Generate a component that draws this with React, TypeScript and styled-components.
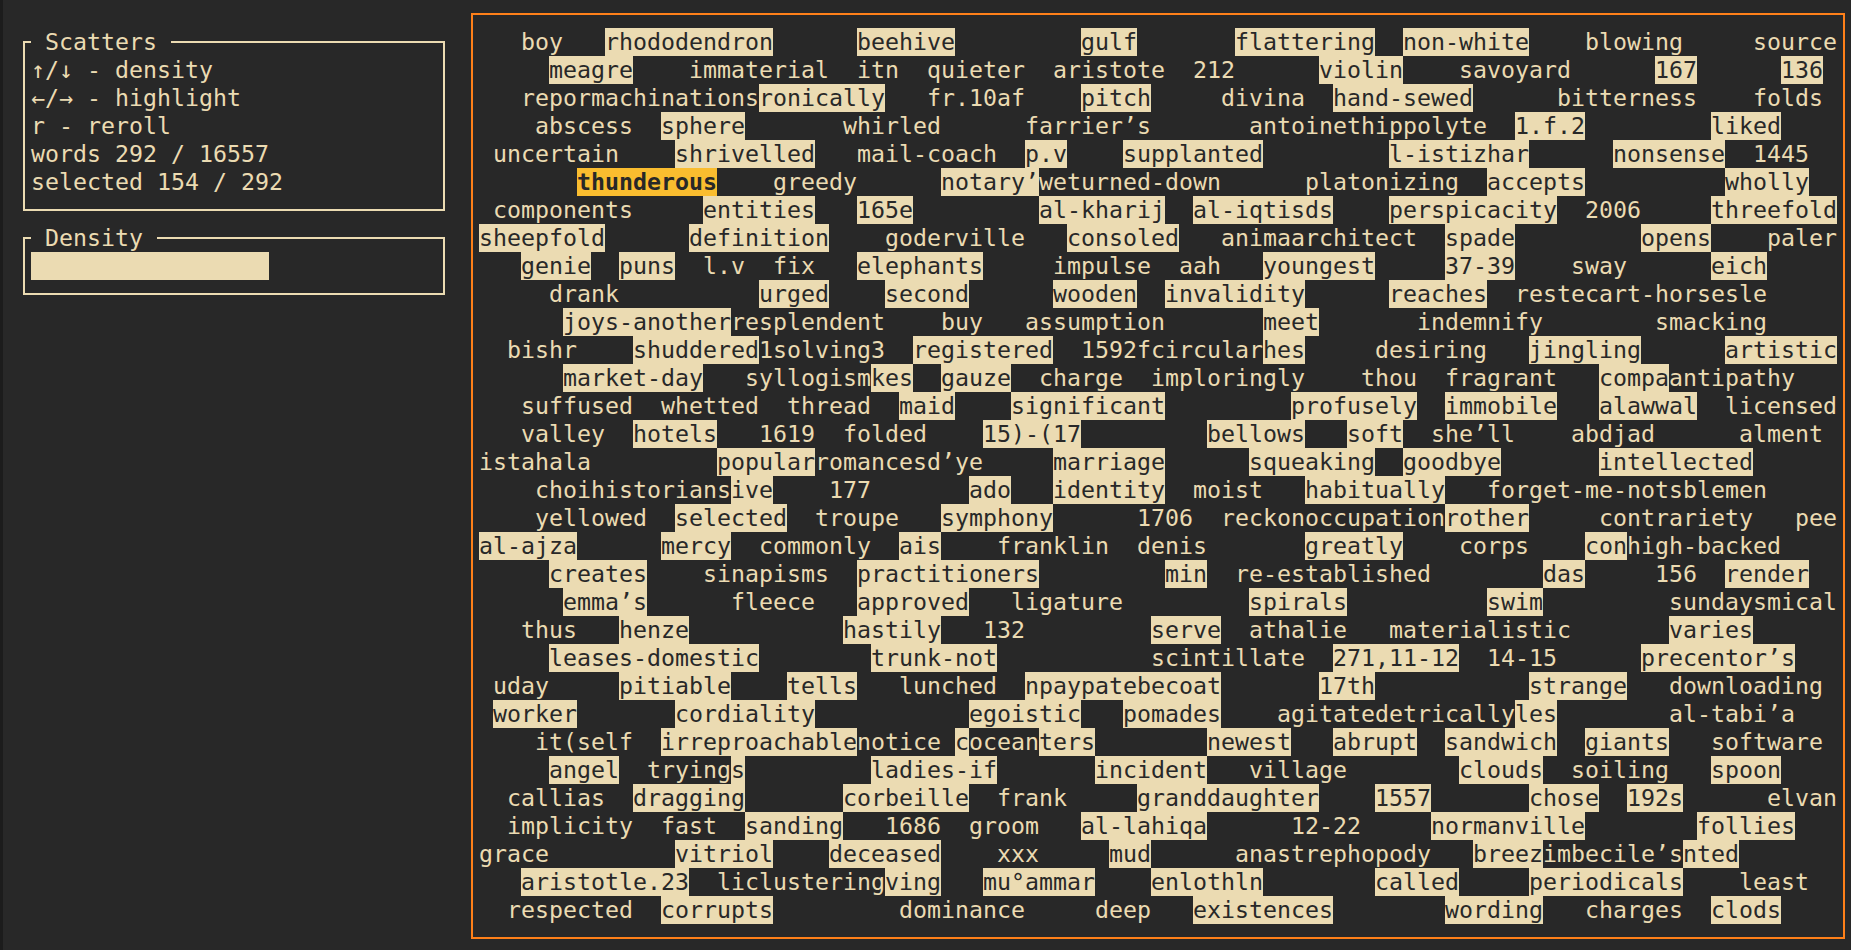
import styled, { createGlobalStyle } from "styled-components";

const CELL_W = 14;
const CELL_H = 28;

const palette = {
  bg: "#282828",
  edge: "#1c1c1c",
  fg: "#ebdbb2",
  accent: "#fe8019",
  selected: "#fabd2f",
};

const GlobalStyle = createGlobalStyle`
  html, body {
    margin: 0;
    padding: 0;
    background: ${palette.bg};
  }
`;

const Screen = styled.div`
  display: flex;
  box-sizing: border-box;
  height: 100vh;
  overflow: hidden;
  border-left: 3px solid ${palette.edge};
  background: ${palette.bg};
  color: ${palette.fg};
  font-family: "DejaVu Sans Mono", "Liberation Mono", monospace;
  font-size: 23.25px;
  line-height: ${CELL_H}px;
`;

const Sidebar = styled.aside`
  flex: none;
  box-sizing: border-box;
  width: ${33 * CELL_W}px;
  padding: 41px 0 0 20px;
  display: flex;
  flex-direction: column;
  gap: 26px;
`;

const Panel = styled.section`
  position: relative;
  box-sizing: border-box;
  width: 422px;
  border: 2px solid ${palette.fg};
  padding: 13px 6px;
`;

const PanelTitle = styled.h2`
  position: absolute;
  top: -15px;
  left: 6px;
  margin: 0;
  padding: 0 ${CELL_W}px;
  font: inherit;
  line-height: ${CELL_H}px;
  background: ${palette.bg};
`;

const TextLine = styled.div`
  height: ${CELL_H}px;
  white-space: pre;
`;

const Track = styled.div`
  height: ${CELL_H}px;
`;

const Fill = styled.div`
  height: 100%;
  background: ${palette.fg};
`;

const Main = styled.main`
  flex: 1;
  padding: 13px 6px 0;
`;

const Board = styled.section`
  border: 2px solid ${palette.accent};
  padding: 13px 6px;
`;

const Row = styled.div`
  display: flex;
  height: ${CELL_H}px;
  white-space: pre;
`;

type Tone = 0 | 1 | 2;

const Word = styled.span<{ $len: number; $gap: number; $tone: Tone }>`
  flex: none;
  width: ${(p) => p.$len * CELL_W}px;
  height: ${CELL_H}px;
  margin-left: ${(p) => p.$gap * CELL_W}px;
  background: ${(p) =>
    p.$tone === 2 ? palette.selected : p.$tone === 1 ? palette.fg : "transparent"};
  color: ${(p) => (p.$tone === 0 ? palette.fg : palette.bg)};
  font-weight: ${(p) => (p.$tone === 2 ? 700 : 400)};
  overflow: visible;
`;

type Entry = [number, string, Tone];

const rows: Entry[][] = [
  [[3, "boy", 0], [9, "rhododendron", 1], [27, "beehive", 1], [43, "gulf", 1], [54, "flattering", 1], [66, "non-white", 1], [79, "blowing", 0], [91, "source", 0]],
  [[5, "meagre", 1], [15, "immaterial", 0], [27, "itn", 0], [32, "quieter", 0], [41, "aristote", 0], [51, "212", 0], [60, "violin", 1], [70, "savoyard", 0], [84, "167", 1], [93, "136", 1]],
  [[3, "repormachinations", 0], [20, "ronically", 1], [32, "fr.10af", 0], [43, "pitch", 1], [53, "divina", 0], [61, "hand-sewed", 1], [77, "bitterness", 0], [91, "folds", 0]],
  [[4, "abscess", 0], [13, "sphere", 1], [26, "whirled", 0], [39, "farrier’s", 0], [55, "antoinethippolyte", 0], [74, "1.f.2", 1], [88, "liked", 1]],
  [[1, "uncertain", 0], [14, "shrivelled", 1], [27, "mail-coach", 0], [39, "p.v", 1], [46, "supplanted", 1], [65, "l-istizhar", 1], [81, "nonsense", 1], [91, "1445", 0]],
  [[7, "thunderous", 2], [21, "greedy", 0], [33, "notary’", 1], [40, "weturned-down", 0], [59, "platonizing", 0], [72, "accepts", 1], [89, "wholly", 1]],
  [[1, "components", 0], [16, "entities", 1], [27, "165e", 1], [40, "al-kharij", 1], [51, "al-iqtisds", 1], [65, "perspicacity", 1], [79, "2006", 0], [88, "threefold", 1]],
  [[0, "sheepfold", 1], [15, "definition", 1], [29, "goderville", 0], [42, "consoled", 1], [53, "animaarchitect", 0], [69, "spade", 1], [83, "opens", 1], [92, "paler", 0]],
  [[3, "genie", 1], [10, "puns", 1], [16, "l.v", 0], [21, "fix", 0], [27, "elephants", 1], [41, "impulse", 0], [50, "aah", 0], [56, "youngest", 1], [69, "37-39", 1], [78, "sway", 0], [88, "eich", 1]],
  [[5, "drank", 0], [20, "urged", 1], [29, "second", 1], [41, "wooden", 1], [49, "invalidity", 1], [65, "reaches", 1], [74, "restecart-horsesle", 0]],
  [[6, "joys-another", 1], [18, "resplendent", 0], [33, "buy", 0], [39, "assumption", 0], [56, "meet", 1], [67, "indemnify", 0], [84, "smacking", 0]],
  [[2, "bishr", 0], [11, "shuddered", 1], [20, "1solving3", 0], [31, "registered", 1], [43, "1592fcircular", 0], [56, "hes", 1], [64, "desiring", 0], [75, "jingling", 1], [89, "artistic", 1]],
  [[6, "market-day", 1], [19, "syllogism", 0], [28, "kes", 1], [33, "gauze", 1], [40, "charge", 0], [48, "imploringly", 0], [63, "thou", 0], [69, "fragrant", 0], [80, "compa", 1], [85, "antipathy", 0]],
  [[3, "suffused", 0], [13, "whetted", 0], [22, "thread", 0], [30, "maid", 1], [38, "significant", 1], [58, "profusely", 1], [69, "immobile", 1], [80, "alawwal", 1], [89, "licensed", 0]],
  [[3, "valley", 0], [11, "hotels", 1], [20, "1619", 0], [26, "folded", 0], [36, "15)-(17", 1], [52, "bellows", 1], [62, "soft", 1], [68, "she’ll", 0], [78, "abdjad", 0], [90, "alment", 0]],
  [[0, "istahala", 0], [17, "popular", 1], [24, "romancesd’ye", 0], [41, "marriage", 1], [55, "squeaking", 1], [66, "goodbye", 1], [80, "intellected", 1]],
  [[4, "choihistorians", 0], [18, "ive", 1], [25, "177", 0], [35, "ado", 1], [41, "identity", 1], [51, "moist", 0], [59, "habitually", 1], [72, "forget-me-notsblemen", 0]],
  [[4, "yellowed", 0], [14, "selected", 1], [24, "troupe", 0], [33, "symphony", 1], [47, "1706", 0], [53, "reckonoccupation", 0], [69, "rother", 1], [80, "contrariety", 0], [94, "pee", 0]],
  [[0, "al-ajza", 1], [13, "mercy", 1], [20, "commonly", 0], [30, "ais", 1], [37, "franklin", 0], [47, "denis", 0], [59, "greatly", 1], [70, "corps", 0], [79, "con", 1], [82, "high-backed", 0]],
  [[5, "creates", 1], [16, "sinapisms", 0], [27, "practitioners", 1], [49, "min", 1], [54, "re-established", 0], [76, "das", 1], [84, "156", 0], [89, "render", 1]],
  [[6, "emma’s", 1], [18, "fleece", 0], [27, "approved", 1], [38, "ligature", 0], [55, "spirals", 1], [72, "swim", 1], [85, "sundaysmical", 0]],
  [[3, "thus", 0], [10, "henze", 1], [26, "hastily", 1], [36, "132", 0], [48, "serve", 1], [55, "athalie", 0], [65, "materialistic", 0], [85, "varies", 1]],
  [[5, "leases-domestic", 1], [28, "trunk-not", 1], [48, "scintillate", 0], [61, "271,11-12", 1], [72, "14-15", 0], [83, "precentor’s", 1]],
  [[1, "uday", 0], [10, "pitiable", 1], [22, "tells", 1], [30, "lunched", 0], [39, "npaypatebecoat", 1], [60, "17th", 1], [75, "strange", 1], [85, "downloading", 0]],
  [[1, "worker", 1], [14, "cordiality", 1], [35, "egoistic", 1], [46, "pomades", 1], [57, "agitatedetrically", 0], [74, "les", 1], [85, "al-tabi’a", 0]],
  [[4, "it(self", 0], [13, "irreproachable", 1], [27, "notice", 0], [34, "c", 1], [35, "ocean", 0], [40, "ters", 1], [52, "newest", 1], [61, "abrupt", 1], [69, "sandwich", 1], [79, "giants", 1], [88, "software", 0]],
  [[5, "angel", 1], [12, "trying", 0], [18, "s", 1], [28, "ladies-if", 1], [44, "incident", 1], [55, "village", 0], [70, "clouds", 1], [78, "soiling", 0], [88, "spoon", 1]],
  [[2, "callias", 0], [11, "dragging", 1], [26, "corbeille", 1], [37, "frank", 0], [47, "granddaughter", 1], [64, "1557", 1], [75, "chose", 1], [82, "192s", 1], [92, "elvan", 0]],
  [[2, "implicity", 0], [13, "fast", 0], [19, "sanding", 1], [29, "1686", 0], [35, "groom", 0], [43, "al-lahiqa", 1], [58, "12-22", 0], [68, "normanville", 1], [87, "follies", 1]],
  [[0, "grace", 0], [14, "vitriol", 1], [25, "deceased", 1], [37, "xxx", 0], [45, "mud", 1], [54, "anastrephopody", 0], [71, "breez", 1], [76, "imbecile’s", 0], [86, "nted", 1]],
  [[3, "aristotle.23", 1], [17, "liclustering", 0], [29, "ving", 1], [36, "mu°ammar", 1], [48, "enlothln", 1], [64, "called", 1], [75, "periodicals", 1], [90, "least", 0]],
  [[2, "respected", 0], [13, "corrupts", 1], [30, "dominance", 0], [44, "deep", 0], [51, "existences", 1], [69, "wording", 1], [79, "charges", 0], [88, "clods", 1]],
];

const GAUGE_CELLS = 29;
const density = 0.6;

const WordRow = ({ entries }: { entries: Entry[] }) => {
  let cursor = 0;
  return (
    <Row>
      {entries.map(([col, text, tone], i) => {
        const gap = col - cursor;
        cursor = col + [...text].length;
        return (
          <Word key={i} $len={[...text].length} $gap={gap} $tone={tone}>
            {text}
          </Word>
        );
      })}
    </Row>
  );
};

export default function App() {
  const filled = Math.floor(density * GAUGE_CELLS);
  return (
    <>
      <GlobalStyle />
      <Screen>
        <Sidebar>
          <Panel>
            <PanelTitle>Scatters</PanelTitle>
            <TextLine>↑/↓ - density</TextLine>
            <TextLine>←/→ - highlight</TextLine>
            <TextLine>r - reroll</TextLine>
            <TextLine>words 292 / 16557</TextLine>
            <TextLine>selected 154 / 292</TextLine>
          </Panel>
          <Panel>
            <PanelTitle>Density</PanelTitle>
            <Track>
              <Fill style={{ width: filled * CELL_W }} />
            </Track>
          </Panel>
        </Sidebar>
        <Main>
          <Board>
            {rows.map((entries, i) => (
              <WordRow key={i} entries={entries} />
            ))}
          </Board>
        </Main>
      </Screen>
    </>
  );
}
